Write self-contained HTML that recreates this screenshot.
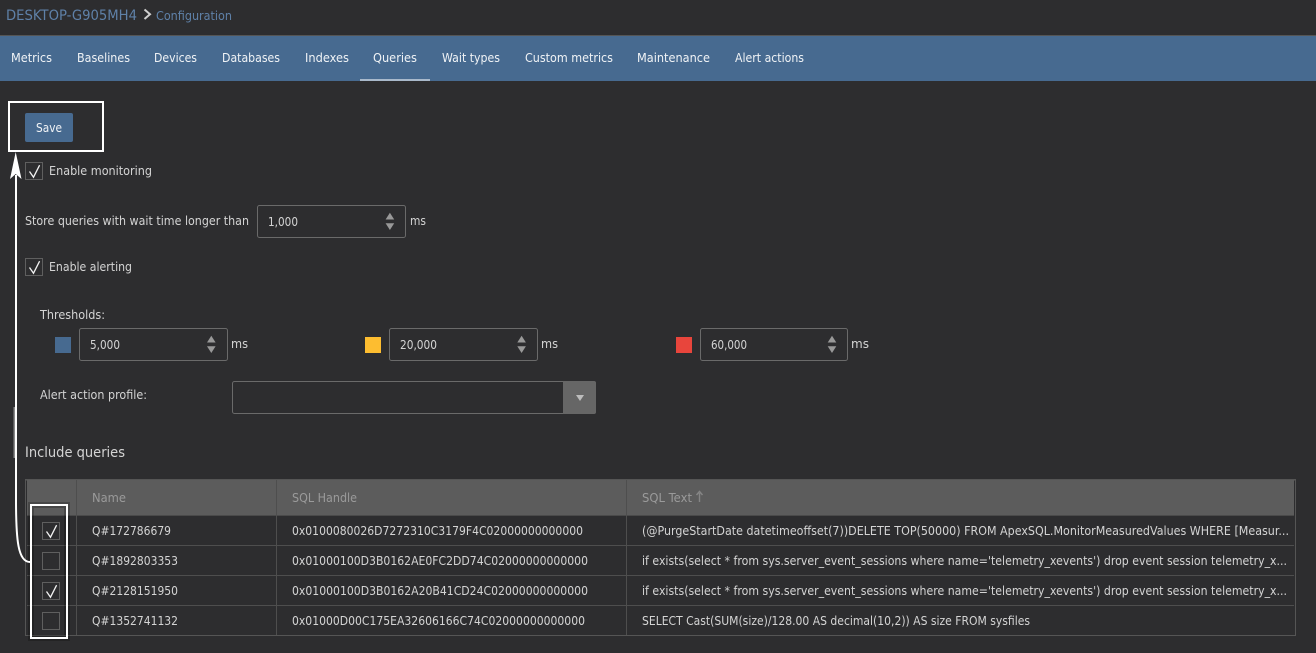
<!DOCTYPE html>
<html><head><meta charset="utf-8"><style>
html,body{margin:0;padding:0;background:#2d2d2f;width:1316px;height:653px;overflow:hidden}
svg{display:block}
text{font-family:"DejaVu Sans",sans-serif;font-size:12.5px;fill:#d4d4d4}
.n{fill:#f0f3f6}
.h{fill:#9a9a9a}
</style></head><body>
<svg width="1316" height="653" viewBox="0 0 1316 653" xmlns="http://www.w3.org/2000/svg">
<defs>
<path id="chk" d="M4.5 9.5L8.5 15.2L14.6 3.2" fill="none" stroke="#f2f2f2" stroke-width="1.3"/>
<g id="spin"><path d="M0 6.7L4.3 0L8.6 6.7Z" fill="#999"/><path d="M0 10.5H8.6L4.3 17.2Z" fill="#999"/></g>
</defs>
<rect width="1316" height="653" fill="#2d2d2f"/>
<!-- header -->
<text x="6" y="20" style="font-size:14px;fill:#5f81a8" textLength="131" lengthAdjust="spacingAndGlyphs">DESKTOP-G905MH4</text>
<path d="M144.5 9.5L150 14.2L144.5 19" fill="none" stroke="#cfcfcf" stroke-width="2"/>
<text x="156" y="20" style="font-size:12.5px;fill:#5f81a8" textLength="76" lengthAdjust="spacingAndGlyphs">Configuration</text>
<rect y="35" width="1316" height="1" fill="#555"/>
<!-- nav -->
<rect y="36" width="1316" height="45" fill="#476a90"/>
<rect x="360" y="79" width="70" height="2" fill="#a9b9cb"/>
<text class="n" x="11" y="62" textLength="41" lengthAdjust="spacingAndGlyphs">Metrics</text>
<text class="n" x="77" y="62" textLength="53" lengthAdjust="spacingAndGlyphs">Baselines</text>
<text class="n" x="154" y="62" textLength="43" lengthAdjust="spacingAndGlyphs">Devices</text>
<text class="n" x="222" y="62" textLength="58" lengthAdjust="spacingAndGlyphs">Databases</text>
<text class="n" x="305" y="62" textLength="44" lengthAdjust="spacingAndGlyphs">Indexes</text>
<text class="n" x="373" y="62" textLength="44" lengthAdjust="spacingAndGlyphs">Queries</text>
<text class="n" x="442" y="62" textLength="58" lengthAdjust="spacingAndGlyphs">Wait types</text>
<text class="n" x="525" y="62" textLength="88" lengthAdjust="spacingAndGlyphs">Custom metrics</text>
<text class="n" x="637" y="62" textLength="73" lengthAdjust="spacingAndGlyphs">Maintenance</text>
<text class="n" x="735" y="62" textLength="69" lengthAdjust="spacingAndGlyphs">Alert actions</text>
<!-- save -->
<rect x="25" y="113" width="48" height="29" rx="2" fill="#476a90"/>
<text class="n" x="36" y="132" textLength="26" lengthAdjust="spacingAndGlyphs">Save</text>
<rect x="9" y="102" width="94" height="49" fill="none" stroke="#fff" stroke-width="2"/>
<!-- enable monitoring -->
<rect x="25.5" y="162.5" width="17" height="17" fill="none" stroke="#5f5f5f"/>
<use href="#chk" x="25" y="162"/>
<text x="49" y="175" textLength="103" lengthAdjust="spacingAndGlyphs">Enable monitoring</text>
<!-- store -->
<text x="25" y="225" textLength="224" lengthAdjust="spacingAndGlyphs">Store queries with wait time longer than</text>
<rect x="257.5" y="205.5" width="148" height="32" rx="2" fill="none" stroke="#6a6a6a"/>
<text x="268" y="226" textLength="30" lengthAdjust="spacingAndGlyphs">1,000</text>
<use href="#spin" x="385.6" y="212.8"/>
<text x="410" y="225" textLength="16" lengthAdjust="spacingAndGlyphs">ms</text>
<!-- alerting -->
<rect x="25.5" y="258.5" width="17" height="17" fill="none" stroke="#5f5f5f"/>
<use href="#chk" x="25" y="258"/>
<text x="49" y="271" textLength="83" lengthAdjust="spacingAndGlyphs">Enable alerting</text>
<text x="40" y="319" textLength="65" lengthAdjust="spacingAndGlyphs">Thresholds:</text>
<!-- thresholds -->
<rect x="55" y="337" width="16" height="16" fill="#476a90"/>
<rect x="79.5" y="328.5" width="148" height="32" rx="2" fill="none" stroke="#6a6a6a"/>
<text x="90" y="349" textLength="30" lengthAdjust="spacingAndGlyphs">5,000</text>
<use href="#spin" x="207" y="335.8"/>
<text x="231" y="348" textLength="17" lengthAdjust="spacingAndGlyphs">ms</text>
<rect x="365" y="337" width="16" height="16" fill="#fdbd30"/>
<rect x="389.5" y="328.5" width="148" height="32" rx="2" fill="none" stroke="#6a6a6a"/>
<text x="400" y="349" textLength="37" lengthAdjust="spacingAndGlyphs">20,000</text>
<use href="#spin" x="517.3" y="335.8"/>
<text x="541" y="348" textLength="17" lengthAdjust="spacingAndGlyphs">ms</text>
<rect x="676" y="337" width="16" height="16" fill="#e8453c"/>
<rect x="700.5" y="328.5" width="147" height="32" rx="2" fill="none" stroke="#6a6a6a"/>
<text x="711" y="349" textLength="36" lengthAdjust="spacingAndGlyphs">60,000</text>
<use href="#spin" x="827.7" y="335.8"/>
<text x="851" y="348" textLength="18" lengthAdjust="spacingAndGlyphs">ms</text>
<!-- alert profile -->
<text x="40" y="399" textLength="107" lengthAdjust="spacingAndGlyphs">Alert action profile:</text>
<rect x="232.5" y="381.5" width="363" height="32" rx="2" fill="none" stroke="#6a6a6a"/>
<path d="M563 381H594Q596 381 596 383V412Q596 414 594 414H563Z" fill="#666"/>
<path d="M576 395H584L580 401Z" fill="#bdbdbd"/>
<text x="25" y="457" style="font-size:14px" textLength="100" lengthAdjust="spacingAndGlyphs">Include queries</text>
<!-- table -->
<rect x="25.5" y="479.5" width="1270" height="156" fill="none" stroke="#555"/>
<rect x="26" y="480" width="1269" height="1" fill="#444"/>
<rect x="27" y="480" width="1267" height="35" fill="#5c5c5c"/>
<rect x="27" y="515" width="1267" height="1" fill="#4a4a4a"/>
<rect x="27" y="545" width="1267" height="1" fill="#4e4e4e"/>
<rect x="27" y="575" width="1267" height="1" fill="#4e4e4e"/>
<rect x="27" y="605" width="1267" height="1" fill="#4e4e4e"/>
<rect x="26" y="635" width="1269" height="1" fill="#555"/>
<rect x="76" y="480" width="1" height="155" fill="#4e4e4e"/>
<rect x="276" y="480" width="1" height="155" fill="#4e4e4e"/>
<rect x="626" y="480" width="1" height="155" fill="#4e4e4e"/>
<text class="h" x="92" y="502" textLength="34" lengthAdjust="spacingAndGlyphs">Name</text>
<text class="h" x="292" y="502" textLength="65" lengthAdjust="spacingAndGlyphs">SQL Handle</text>
<text class="h" x="642" y="502" textLength="50" lengthAdjust="spacingAndGlyphs">SQL Text</text>
<path d="M699.5 502V493M696.5 495L699.5 491.5L702.5 495" fill="none" stroke="#858585" stroke-width="1.4"/>
<!-- rows -->
<rect x="31" y="505" width="36" height="133" fill="none" stroke="#000" stroke-opacity=".22" stroke-width="6"/>
<rect x="42.5" y="522.5" width="17" height="17" fill="none" stroke="#5f5f5f"/>
<use href="#chk" x="42" y="522"/>
<rect x="42.5" y="552.5" width="17" height="17" fill="none" stroke="#5f5f5f"/>
<rect x="42.5" y="582.5" width="17" height="17" fill="none" stroke="#5f5f5f"/>
<use href="#chk" x="42" y="582"/>
<rect x="42.5" y="612.5" width="17" height="17" fill="none" stroke="#5f5f5f"/>
<text x="92" y="535" textLength="79" lengthAdjust="spacingAndGlyphs">Q#172786679</text>
<text x="92" y="565" textLength="86" lengthAdjust="spacingAndGlyphs">Q#1892803353</text>
<text x="92" y="595" textLength="86" lengthAdjust="spacingAndGlyphs">Q#2128151950</text>
<text x="92" y="625" textLength="86" lengthAdjust="spacingAndGlyphs">Q#1352741132</text>
<text x="292" y="535" textLength="291" lengthAdjust="spacingAndGlyphs">0x0100080026D7272310C3179F4C02000000000000</text>
<text x="292" y="565" textLength="296" lengthAdjust="spacingAndGlyphs">0x01000100D3B0162AE0FC2DD74C02000000000000</text>
<text x="292" y="595" textLength="296" lengthAdjust="spacingAndGlyphs">0x01000100D3B0162A20B41CD24C02000000000000</text>
<text x="292" y="625" textLength="293" lengthAdjust="spacingAndGlyphs">0x01000D00C175EA32606166C74C02000000000000</text>
<text x="642" y="535" textLength="647" lengthAdjust="spacingAndGlyphs">(@PurgeStartDate datetimeoffset(7))DELETE TOP(50000) FROM ApexSQL.MonitorMeasuredValues WHERE [Measur...</text>
<text x="642" y="565" textLength="645" lengthAdjust="spacingAndGlyphs">if exists(select * from sys.server_event_sessions where name='telemetry_xevents') drop event session telemetry_x...</text>
<text x="642" y="595" textLength="645" lengthAdjust="spacingAndGlyphs">if exists(select * from sys.server_event_sessions where name='telemetry_xevents') drop event session telemetry_x...</text>
<text x="642" y="625" textLength="388" lengthAdjust="spacingAndGlyphs">SELECT Cast(SUM(size)/128.00 AS decimal(10,2)) AS size FROM sysfiles</text>
<!-- annotation -->
<rect x="31" y="505" width="36" height="133" fill="none" stroke="#fff" stroke-width="2"/>
<rect x="13.5" y="407" width="1.5" height="51" fill="#888"/>
<path d="M16 175V500C16 540 18 562 30 562" fill="none" stroke="#fff" stroke-width="2"/>
<path d="M15.7 152L21.5 179L15.7 174L10 179Z" fill="#fff"/>
</svg>
</body></html>
